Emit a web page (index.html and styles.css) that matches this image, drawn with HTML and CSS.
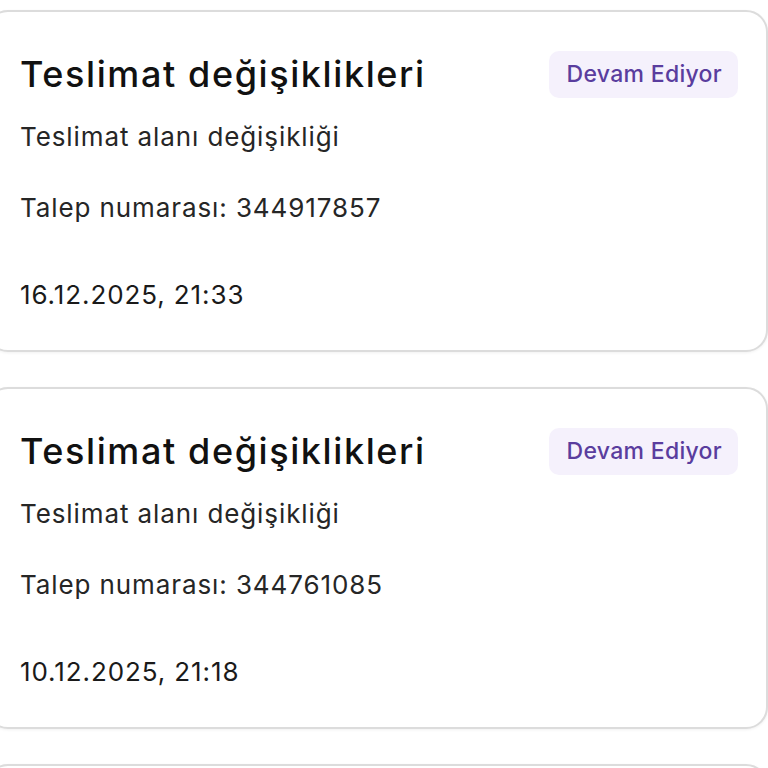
FILE: index.html
```html
<!DOCTYPE html>
<html lang="tr">
<head>
<meta charset="utf-8">
<link rel="stylesheet" href="styles.css">
</head>
<body>
<div class="list">
  <div class="card">
    <div class="head">
      <h2 class="title">Teslimat değişiklikleri</h2>
      <span class="badge">Devam Ediyor</span>
    </div>
    <p class="sub">Teslimat alanı değişikliği</p>
    <p class="num">Talep numarası: 344917857</p>
    <p class="date">16.12.2025, 21:33</p>
  </div>
  <div class="card">
    <div class="head">
      <h2 class="title">Teslimat değişiklikleri</h2>
      <span class="badge">Devam Ediyor</span>
    </div>
    <p class="sub">Teslimat alanı değişikliği</p>
    <p class="num">Talep numarası: 344761085</p>
    <p class="date">10.12.2025, 21:18</p>
  </div>
  <div class="card"></div>
</div>
</body>
</html>
```
FILE: styles.css
```css
html, body {
  margin: 0;
  background: #ffffff;
}
body {
  font-family: Inter, "Noto Sans", sans-serif;
  color: #1c1c1c;
}
.list {
  display: flex;
  flex-direction: column;
  gap: 35px;
  padding-top: 10px;
  margin-left: -14px;
  width: 782px;
}
.card {
  box-sizing: border-box;
  height: 342px;
  border: 2px solid #dcdcdc;
  border-radius: 22px;
  padding: 38px 28px 0 32px;
  box-shadow: 0 1px 3px rgba(0,0,0,0.06);
  background: #fff;
}
.head {
  display: flex;
  justify-content: space-between;
  align-items: center;
}
.title {
  margin: 0;
  font-size: 36px;
  line-height: 48px;
  font-weight: 500;
  color: #111111;
  letter-spacing: 1.6px;
}
.badge {
  background: #f5f1fc;
  color: #5a3d9e;
  font-size: 23px;
  font-weight: 500;
  line-height: 47px;
  padding: 0 16px 0 18px;
  border-radius: 10px;
  letter-spacing: 0.3px;
}
.sub, .num, .date {
  font-size: 26px;
  line-height: 34px;
  font-weight: 400;
  letter-spacing: 0.9px;
  color: #262626;
}
.sub {
  margin: 22px 0 0;
}
.num {
  margin: 37px 0 0;
}
.date {
  margin: 53px 0 0;
  color: #1a1a1a;
}
```
